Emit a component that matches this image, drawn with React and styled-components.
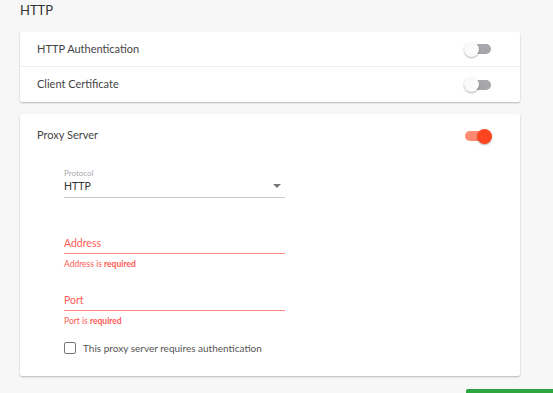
import React from 'react';
import styled, { createGlobalStyle } from 'styled-components';

const Global = createGlobalStyle`
  html, body {
    margin: 0;
    background: #f7f7f7;
    font-family: 'Lato', 'Open Sans', sans-serif;
    color: #333;
  }
`

const Page = styled.div`
  width: 553px;
  height: 393px;
  overflow: hidden;
  padding: 0 33px 0 20px;
  box-sizing: border-box;
  position: relative;
`

const Title = styled.h2`
  margin: 0;
  height: 32px;
  font-size: 13px;
  font-weight: 400;
  line-height: 20px;
  color: #333;
`

const Card = styled.section`
  background: #fff;
  border-radius: 2px;
  box-shadow: 0 1px 2px rgba(0, 0, 0, 0.25);
  margin-bottom: 12px;
`

const Row = styled.div`
  display: flex;
  align-items: center;
  justify-content: space-between;
  height: ${p => p.h || 34}px;
  padding: 0 29px 0 17px;
  border-top: ${p => (p.divided ? '1px solid #f0f0f0' : 'none')};
  font-size: 11px;
  line-height: 14px;
  color: #444;

  & > span:first-child {
    margin-top: ${p => p.lift || -1}px;
  }
`

const Track = styled.span`
  position: relative;
  display: inline-block;
  width: 26px;
  height: 10px;
  border-radius: 5px;
  background: ${p => (p.on ? '#ff8a70' : '#a7a7ab')};
`

const Thumb = styled.span`
  position: absolute;
  top: -2.5px;
  left: ${p => (p.on ? '12px' : '-1px')};
  width: 15px;
  height: 15px;
  border-radius: 50%;
  background: ${p => (p.on ? '#ff4520' : '#fafafa')};
  box-shadow: 0 1px 2px rgba(0, 0, 0, 0.3);
`

const Toggle = ({ on }) => (
  <Track on={on}>
    <Thumb on={on} />
  </Track>
)

const Form = styled.div`
  padding: 10px 0 21px 44px;
  width: 221px;
  display: flex;
  flex-direction: column;
`

const SelectField = styled.div`
  border-bottom: 1px solid #c9c9c9;
  padding-bottom: 3px;
`

const SmallLabel = styled.div`
  font-size: 8px;
  color: #aaa;
  line-height: 10px;
`

const SelectValue = styled.div`
  display: flex;
  align-items: center;
  justify-content: space-between;
  font-size: 10.5px;
  line-height: 16px;
  color: #333;
  padding-right: 4px;
`

const Caret = styled.span`
  width: 0;
  height: 0;
  border-left: 4px solid transparent;
  border-right: 4px solid transparent;
  border-top: 4px solid #777;
`

const InputField = styled.div`
  margin-top: ${p => p.top}px;
  border-bottom: 1px solid #ff8c84;
  font-size: 10.5px;
  line-height: 16px;
  color: #ff5a55;
  padding-bottom: 2px;
`

const Error = styled.div`
  margin-top: 4px;
  font-size: 8.5px;
  line-height: 12px;
  color: #ff5a55;

  b {
    font-weight: 700;
  }
`

const CheckRow = styled.label`
  margin-top: 14px;
  display: flex;
  align-items: center;
  gap: 7px;
  font-size: 10px;
  line-height: 14px;
  color: #555;
  white-space: nowrap;
`

const Box = styled.span`
  width: 10px;
  height: 10px;
  border: 1.5px solid #777;
  border-radius: 2px;
  flex-shrink: 0;
`

const SaveBar = styled.div`
  position: absolute;
  left: 466px;
  top: 389px;
  width: 100px;
  height: 10px;
  background: #2ea63f;
  border-radius: 2px 0 0 0;
`

export default function App() {
  return (
    <Page>
      <Global />
      <Title>HTTP</Title>
      <Card>
        <Row>
          <span>HTTP Authentication</span>
          <Toggle />
        </Row>
        <Row divided h={35}>
          <span>Client Certificate</span>
          <Toggle />
        </Row>
      </Card>
      <Card>
        <Row h={44} lift={-3}>
          <span>Proxy Server</span>
          <Toggle on />
        </Row>
        <Form>
          <SelectField>
            <SmallLabel>Protocol</SmallLabel>
            <SelectValue>
              HTTP
              <Caret />
            </SelectValue>
          </SelectField>
          <InputField top={37}>Address</InputField>
          <Error>Address is <b>required</b></Error>
          <InputField top={22}>Port</InputField>
          <Error>Port is <b>required</b></Error>
          <CheckRow>
            <Box />
            This proxy server requires authentication
          </CheckRow>
        </Form>
      </Card>
      <SaveBar />
    </Page>
  )
}
